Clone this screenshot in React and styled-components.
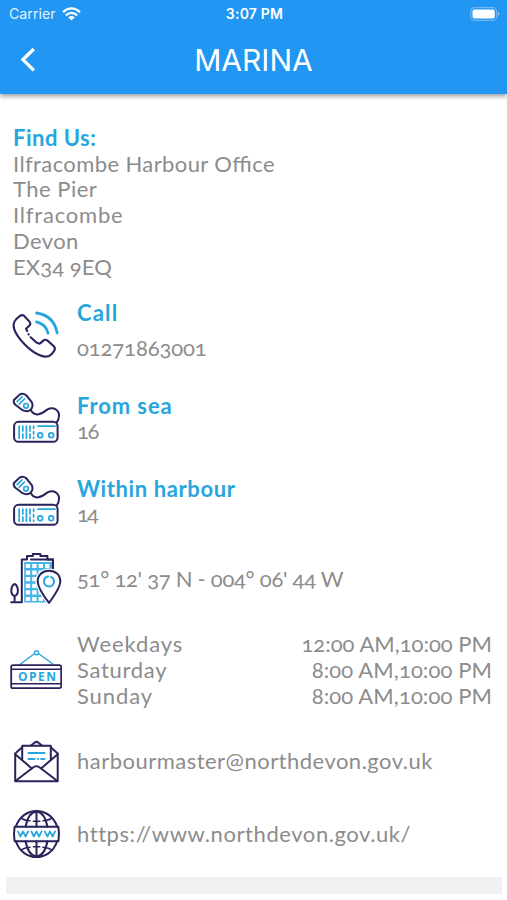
import React from 'react';
import styled, { createGlobalStyle } from 'styled-components';

const NAVY = '#29235c';
const BLUE = '#27a5dd';

const App = () => {
  return (
    <>
      <GlobalStyle />
      <Header>
        <StatusBar>
          <Carrier>
            Carrier
            <WifiIcon />
          </Carrier>
          <Clock>3:07 PM</Clock>
          <BatteryIcon />
        </StatusBar>
        <NavBar>
          <BackIcon />
          <Title>MARINA</Title>
        </NavBar>
      </Header>

      <Content>
        <Address>
          <Label $spacing="0.5px">Find Us:</Label>
          <Line $spacing="0.4px" $ligatures>Ilfracombe Harbour Office</Line>
          <Line $spacing="0.5px">The Pier</Line>
          <Line $spacing="0.8px">Ilfracombe</Line>
          <Line $spacing="0.4px">Devon</Line>
          <Line $spacing="0.1px">EX34 9EQ</Line>
        </Address>

        <Row $top={20} $height={62}>
          <PhoneIcon />
          <Info $gap={10}>
            <Label $spacing="1.2px">Call</Label>
            <Line $spacing="-0.1px">01271863001</Line>
          </Info>
        </Row>

        <Row $top={31} $height={52}>
          <RadioIcon />
          <Info>
            <Label $spacing="0.9px">From sea</Label>
            <Line $spacing="-1.3px">16</Line>
          </Info>
        </Row>

        <Row $top={31} $height={52}>
          <RadioIcon />
          <Info>
            <Label $spacing="0.6px">Within harbour</Label>
            <Line $spacing="-1.8px">14</Line>
          </Info>
        </Row>

        <Row $top={26} $height={52}>
          <BuildingIcon />
          <Info>
            <Line $spacing="-0.28px">51° 12' 37 N - 004° 06' 44 W</Line>
          </Info>
        </Row>

        <Row $top={26} $height={77}>
          <OpenIcon />
          <Info>
            <Hours>
              <Line $spacing="0.9px">Weekdays</Line>
              <Line>12:00 AM,10:00 PM</Line>
            </Hours>
            <Hours>
              <Line $spacing="0.7px">Saturday</Line>
              <Line $spacing="0.1px">8:00 AM,10:00 PM</Line>
            </Hours>
            <Hours>
              <Line $spacing="0.9px">Sunday</Line>
              <Line $spacing="0.1px">8:00 AM,10:00 PM</Line>
            </Hours>
          </Info>
        </Row>

        <Row $top={27} $height={52}>
          <MailIcon />
          <Info>
            <Line $spacing="0.48px">harbourmaster@northdevon.gov.uk</Line>
          </Info>
        </Row>

        <Row $top={21} $height={52}>
          <GlobeIcon />
          <Info>
            <Line $spacing="0.57px">https://www.northdevon.gov.uk/</Line>
          </Info>
        </Row>
      </Content>
      <BottomStrip />
    </>
  );
};

const WifiIcon = () => (
  <svg width="19" height="14" viewBox="0 0 19 14" fill="none" stroke="#fff" strokeWidth="2.3">
    <path d="M1 5.2Q9.5 -2.4 18 5.2" />
    <path d="M3.8 8.3Q9.5 3.4 15.2 8.3" />
    <path d="M6.2 10.2Q9.5 7.6 12.8 10.2L9.5 13.6Z" fill="#fff" stroke="none" />
  </svg>
);

const BatteryIcon = () => (
  <Battery width="30" height="14" viewBox="0 0 30 14">
    <rect x="0.7" y="0.7" width="26" height="12.6" rx="3.8" fill="none" stroke="#6fb9f7" strokeWidth="1.2" />
    <rect x="2.5" y="2.4" width="22.3" height="9.2" rx="2" fill="#fff" />
    <path d="M28 5V9Q29.4 8.4 29.4 7T28 5Z" fill="#8fc8fa" />
  </Battery>
);

const BackIcon = () => (
  <BackArrow width="18" height="26" viewBox="0 0 18 26">
    <path d="M14.8 2L4 12.6L14.8 23.4" />
  </BackArrow>
);

const PhoneIcon = () => (
  <Icon width="52" height="52" viewBox="0 0 52 52" $shift={9}>
    <g stroke={NAVY} strokeWidth="2.1">
      <path d="M17.2 22.1L16 19.8L19.6 16.4Q21 14.6 19.7 12.9L14 6.8Q12.2 5.3 10 6.8L5.9 10.6Q2.3 14.4 4.3 20.4C7.5 29.8 20.8 42.8 29.2 46Q34.4 48.7 39.2 46.9Q41.8 45.4 44.2 41.8Q45.8 39.4 43.8 37.2L37.5 31.6Q35.4 30 33.5 31.4L30.2 34.4Q28.8 35 26.8 33.7L20.6 28.2" />
      <path d="M18.5 25.2L18.7 25.4" />
    </g>
    <g stroke={BLUE} strokeWidth="2.8">
      <path d="M26.5 4Q44 6.6 47.2 24" />
      <path d="M26.5 12.8Q36 15 38 24.2" />
    </g>
  </Icon>
);

const RadioIcon = () => (
  <Icon width="52" height="52" viewBox="0 0 52 52">
    <g stroke={NAVY} strokeWidth="2">
      <path d="M4 8L9.6 2.6Q12.8 0.6 16 3L21.4 9.6Q24 14 20.8 17.4Q17.4 20.6 12.6 18.2L5.4 12.8Q3 10.4 4 8Z" />
      <path d="M20.8 18C25 25.7 31.8 21.8 37.5 17.4C43.6 14.3 49.4 18 49 24Q48.7 28.4 46.7 30.5" />
      <rect x="4.1" y="29.8" width="43.5" height="20" rx="4.4" />
    </g>
    <g stroke={BLUE} strokeWidth="1.7">
      <path d="M7.1 9.6L12 4.9M9.2 12.2L14.5 7" />
      <circle cx="16" cy="13.8" r="2.3" />
      <path d="M9.2 34V46.2M16.4 34V46.2M28 34.2H45" />
      <path d="M12.8 34V46.2M20 34V46.2" strokeDasharray="5 3" />
      <path d="M23.6 34V46.2" strokeDasharray="2.5 3" />
      <circle cx="30.2" cy="43.2" r="2.4" />
      <circle cx="41.2" cy="43.2" r="2.4" />
    </g>
  </Icon>
);

const BuildingIcon = () => (
  <Icon width="52" height="52" viewBox="0 0 52 52">
    <rect x="14.2" y="9" width="28" height="40.5" fill="#45b4e8" stroke="none" />
    <path d="M15.8 13H41M15.8 19.6H41M15.8 26.2H41M15.8 32.8H41M15.8 39.4H41M15.8 46H41" stroke="#fff" strokeWidth="4.2" strokeDasharray="4.4 2" strokeLinecap="butt" />
    <g stroke={NAVY} strokeWidth="2">
      <path d="M1.2 49.2H11.8V6.4H17V3.1H22.8V1H30.4V3.1H37.4V6.4H43V16" />
      <path d="M21 6.4H43" />
      <path d="M4.6 48V43.2Q1.2 41.8 1.3 37.5Q1.7 32 4.6 31Q7.5 32 7.9 37.5Q8 41.8 4.6 43.2" />
    </g>
    <path d="M39 49.8Q28.2 35.8 27.8 29.2C26.3 14.2 51.5 13.5 50.2 29.5Q49.6 35.8 39 49.8Z" fill="#fff" stroke="#fff" strokeWidth="4.6" />
    <path d="M39 49.8Q28.2 35.8 27.8 29.2C26.3 14.2 51.5 13.5 50.2 29.5Q49.6 35.8 39 49.8Z" stroke={NAVY} strokeWidth="2" />
    <circle cx="39" cy="28.5" r="5" stroke={BLUE} strokeWidth="2" strokeDasharray="22 3" />
  </Icon>
);

const OpenIcon = () => (
  <Icon width="52" height="52" viewBox="0 0 52 52" $shift={4}>
    <path d="M10.2 18.3L24.3 7.8M28.7 7.8L43.3 18.3" stroke={BLUE} strokeWidth="1.4" />
    <circle cx="26.5" cy="6.7" r="2" stroke={BLUE} strokeWidth="1.4" />
    <rect x="1.2" y="19.2" width="50" height="23" rx="1.8" stroke={NAVY} strokeWidth="1.8" />
    <path d="M2 23.2H50.4M2 37.8H50.4" stroke={NAVY} strokeWidth="1.4" />
    <SignText x="8" y="34.8" textLength="38">OPEN</SignText>
  </Icon>
);

const MailIcon = () => (
  <Icon width="52" height="52" viewBox="0 0 52 52">
    <g stroke={NAVY} strokeWidth="2">
      <path d="M12.2 12.2L5.2 18.4V46.3H47.7V18.4L40.7 12.2" />
      <path d="M5.2 19.2L21.8 33.4M47.7 19.2L31.1 33.4" />
      <path d="M5.8 45.7L22.4 33Q26.4 29.6 30.4 33L47.1 45.7" />
      <path d="M12.2 24.2V10.8H40.8V24.2" />
      <path d="M21 10.5L24.5 7.7Q26.5 6.1 28.5 7.7L32 10.5" />
    </g>
    <path d="M18.5 18H34.5M18.5 23.9H24.6M28 23.9H28.1M31.2 23.9H34.5" stroke={BLUE} strokeWidth="2" />
  </Icon>
);

const GlobeIcon = () => (
  <Icon width="52" height="52" viewBox="0 0 52 52">
    <g stroke={NAVY} strokeWidth="2">
      <path d="M5.8 18.8C13 -2.4 40 -2.4 47.2 18.8M5.8 33.2C13 54.4 40 54.4 47.2 33.2" />
      <path d="M15.6 18.8Q18.2 4.5 26.5 3.5Q34.8 4.5 37.4 18.8M15.6 33.2Q18.2 47.5 26.5 48.5Q34.8 47.5 37.4 33.2" />
      <path d="M26.5 3V18.8M26.5 33.2V49" />
      <path d="M11 9.8Q14 12.3 20 12.8M42 9.8Q39 12.3 33 12.8M23.4 13.2H29.8M11 42.2Q14 39.7 20 39.2M42 42.2Q39 39.7 33 39.2M23.4 38.8H29.8" strokeWidth="1.6" />
      <path d="M4.6 18.8H48.4Q49.6 26 48.4 33.2H4.6Q3.4 26 4.6 18.8Z" />
    </g>
    <path d="M7.8 23.4L10.4 28.5L13 23.4L15.6 28.5L18.2 23.4M21.3 23.4L23.9 28.5L26.5 23.4L29.1 28.5L31.7 23.4M34.8 23.4L37.4 28.5L40 23.4L42.6 28.5L45.2 23.4" stroke={BLUE} strokeWidth="1.7" />
  </Icon>
);

const GlobalStyle = createGlobalStyle`
  * {
    box-sizing: border-box;
  }

  body {
    margin: 0;
    background: #fff;
    font-family: Lato, 'Open Sans', sans-serif;
  }

  p, h1 {
    margin: 0;
  }
`;

const Header = styled.header`
  height: 94px;
  background: #2196f3;
  box-shadow: 0 2px 5px rgba(0, 0, 0, 0.42);
  color: #fff;
  font-family: Inter, Roboto, sans-serif;
`;

const StatusBar = styled.div`
  display: grid;
  grid-template-columns: 1fr auto 1fr;
  align-items: center;
  height: 27px;
  padding: 0 7px 0 9px;
  font-size: 14.2px;
`;

const Carrier = styled.div`
  display: flex;
  align-items: center;
  gap: 6px;
  color: #e3f2fd;
`;

const Clock = styled.p`
  font-size: 14px;
  font-weight: 600;
  letter-spacing: 0.2px;
`;

const Battery = styled.svg`
  justify-self: end;
`;

const BackArrow = styled.svg`
  fill: none;
  stroke: #fff;
  stroke-width: 3.4;
`;

const NavBar = styled.div`
  display: grid;
  grid-template-columns: 40px 1fr 40px;
  align-items: center;
  height: 65px;
  padding: 0 19px;
`;

const Title = styled.h1`
  font-size: 30px;
  font-weight: 400;
  line-height: 36px;
  text-align: center;
`;

const Content = styled.main`
  padding: 31px 15px 0 10px;
`;

const Address = styled.div`
  padding-left: 3px;
`;

const Row = styled.section`
  display: flex;
  align-items: center;
  gap: 15px;
  height: ${(props) => props.$height}px;
  margin-top: ${(props) => props.$top}px;
`;

const Icon = styled.svg`
  flex: 0 0 52px;
  width: 52px;
  margin-top: ${(props) => props.$shift || 0}px;
  fill: none;
  stroke-linecap: round;
  stroke-linejoin: round;
`;

const SignText = styled.text`
  fill: ${BLUE};
  font-family: 'Open Sans', sans-serif;
  font-size: 12px;
  font-weight: 700;
`;

const Info = styled.div`
  display: flex;
  flex: 1;
  flex-direction: column;
  gap: ${(props) => props.$gap || 0}px;
`;

const Line = styled.p`
  color: #8c8c8c;
  font-size: 22px;
  font-weight: 400;
  font-variant-numeric: oldstyle-nums;
  font-feature-settings: ${(props) => (props.$ligatures ? "'liga' 1" : 'normal')};
  line-height: 25.7px;
  letter-spacing: ${(props) => props.$spacing || '0'};
  white-space: nowrap;
`;

const Label = styled(Line)`
  color: ${BLUE};
  font-weight: 700;
`;

const Hours = styled.div`
  display: flex;
  justify-content: space-between;
`;

const BottomStrip = styled.footer`
  height: 17px;
  margin: 17px 5px 0 6px;
  background: #eff1f3;
`;

export default App;
